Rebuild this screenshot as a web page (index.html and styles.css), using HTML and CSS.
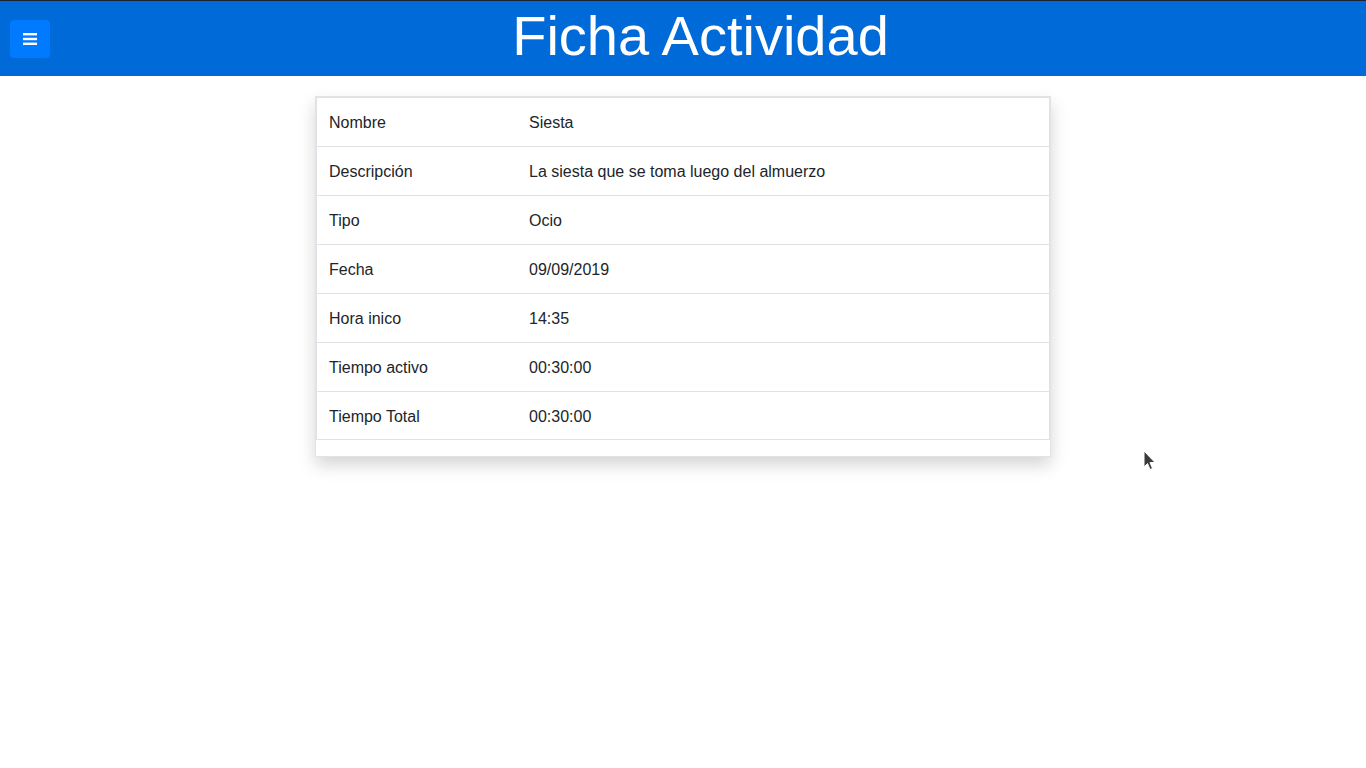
FILE: index.html
```html
<!DOCTYPE html>
<html lang="es">
<head>
<meta charset="utf-8">
<title>Ficha Actividad</title>
<link rel="stylesheet" href="styles.css">
</head>
<body>
<header class="topbar">
  <button class="menu-btn" aria-label="Menú">
    <svg width="14" height="12" viewBox="0 0 14 12"><rect x="0" y="0" width="14" height="2.4" fill="#fff"/><rect x="0" y="4.8" width="14" height="2.4" fill="#fff"/><rect x="0" y="9.6" width="14" height="2.4" fill="#fff"/></svg>
  </button>
  <h1 class="title">Ficha Actividad</h1>
</header>
<main class="page">
  <section class="card">
    <table class="detail">
      <tbody>
        <tr><td class="label">Nombre</td><td>Siesta</td></tr>
        <tr><td class="label">Descripción</td><td>La siesta que se toma luego del almuerzo</td></tr>
        <tr><td class="label">Tipo</td><td>Ocio</td></tr>
        <tr><td class="label">Fecha</td><td>09/09/2019</td></tr>
        <tr><td class="label">Hora inico</td><td>14:35</td></tr>
        <tr><td class="label">Tiempo activo</td><td>00:30:00</td></tr>
        <tr><td class="label">Tiempo Total</td><td>00:30:00</td></tr>
      </tbody>
    </table>
  </section>
</main>
<svg class="cursor" width="14" height="22" viewBox="0 0 14 22"><path d="M1 1 L1 17 L4.5 13.5 L7 19.5 L9.5 18.5 L7 12.5 L12 12.5 Z" fill="#3a3a3a" stroke="#fff" stroke-width="1"/></svg>
</body>
</html>
```
FILE: styles.css
```css
html, body {
  margin: 0;
  padding: 0;
  background: #fff;
  font-family: "Liberation Sans", Arial, sans-serif;
  color: #212529;
}
body {
  min-height: 100vh;
}
.topbar {
  display: flex;
  align-items: flex-start;
  height: 75px;
  background: #006ad9;
  border-top: 1px solid #1c2230;
}
.menu-btn {
  margin: 19px 0 0 10px;
  width: 40px;
  height: 38px;
  padding: 0;
  border: none;
  border-radius: 4px;
  background: #007bff;
  display: flex;
  align-items: center;
  justify-content: center;
  cursor: pointer;
}
.title {
  flex: 1;
  margin: 1px 15px 0 0;
  text-align: center;
  font-weight: 400;
  font-size: 56px;
  line-height: 67px;
  color: #fff;
}
.page {
  display: flex;
  justify-content: center;
  padding: 20px 0 60px;
}
.card {
  width: 734px;
  border: 1px solid #e3e3e3;
  padding-bottom: 16px;
  box-shadow: 0 8px 16px rgba(0, 0, 0, 0.17);
  background: #fff;
}
.detail {
  width: 100%;
  border-collapse: collapse;
  border-left: 1px solid #dee2e6;
  border-right: 1px solid #dee2e6;
  font-size: 16px;
  line-height: 24px;
}
.detail td {
  padding: 13px 12px 11px;
  border-top: 1px solid #dee2e6;
  border-bottom: 1px solid #dee2e6;
  text-align: left;
}
.detail tr:last-child td {
  padding-bottom: 10px;
}
.detail td.label {
  width: 176px;
}
.cursor {
  position: absolute;
  left: 1143px;
  top: 450px;
}
```
